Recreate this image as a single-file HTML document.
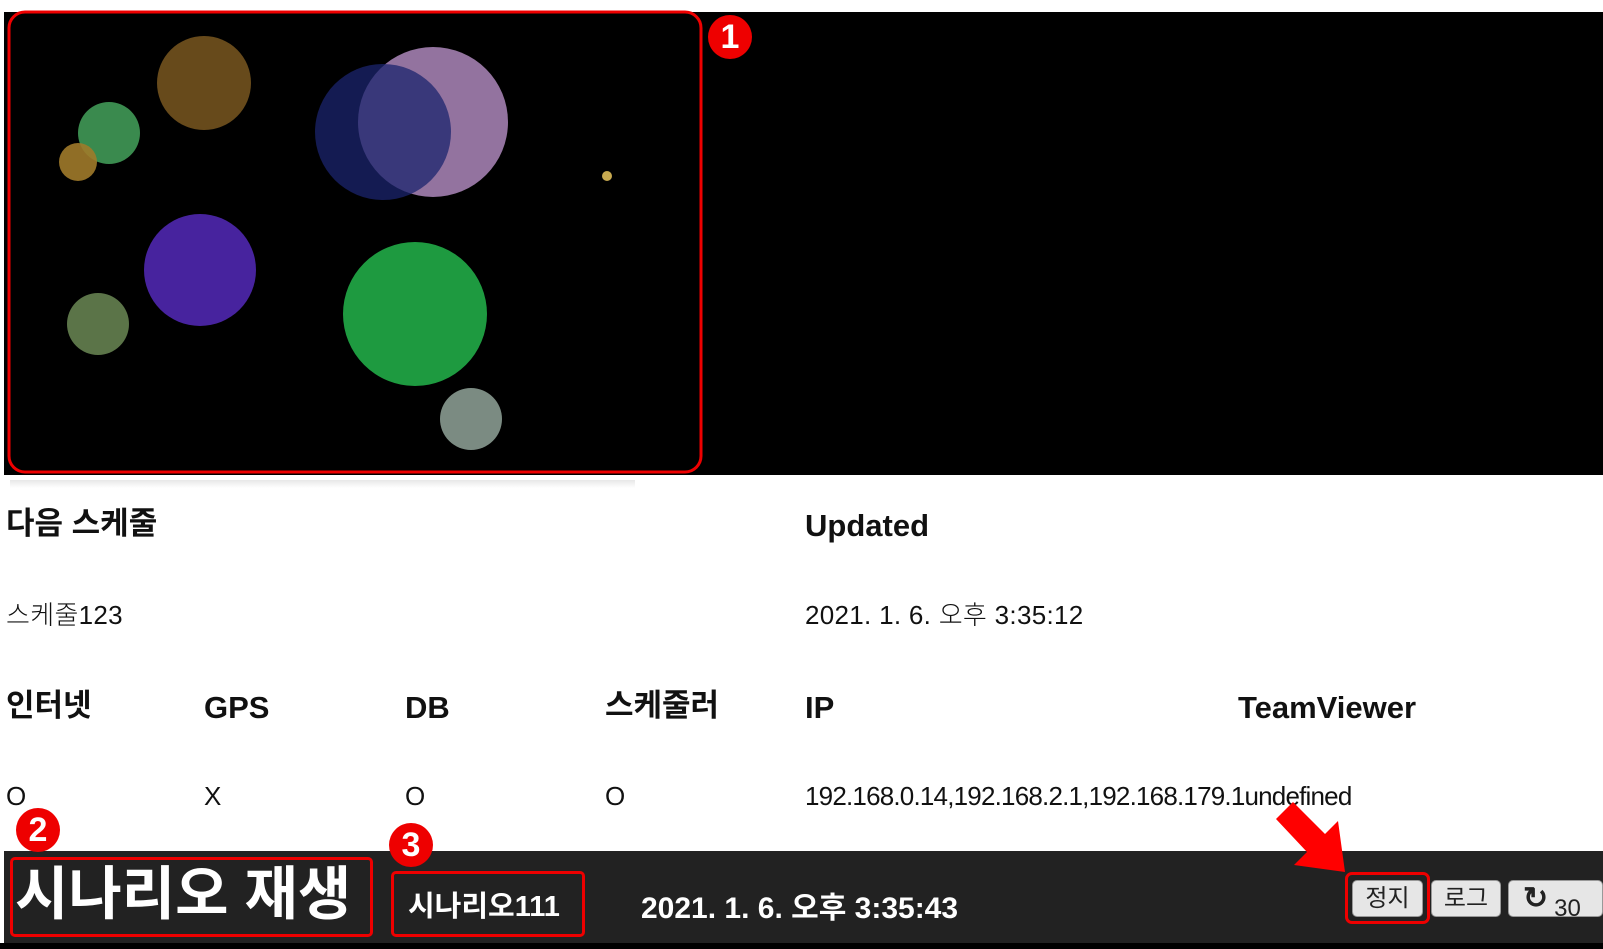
<!DOCTYPE html>
<html><head><meta charset="utf-8"><style>
*{margin:0;padding:0;box-sizing:border-box}
body{width:1603px;height:949px;background:#fff;position:relative;overflow:hidden;font-family:"Liberation Sans","Noto Sans CJK KR",sans-serif;color:#111}
.a{position:absolute;white-space:nowrap;line-height:1}
.h{font-size:31px;font-weight:bold}
.v{font-size:26px;letter-spacing:0.3px;font-weight:300}
.btn{position:absolute;top:880px;height:37px;background:#e6e6e6;border-radius:5px;border:1px solid #999;font-size:24px;color:#222;text-align:center;line-height:35px}
.badge{position:absolute;width:44px;height:44px;border-radius:50%;background:#e00;color:#fff;font-weight:bold;font-size:34px;text-align:center;line-height:44px}
</style></head><body>
<div style="position:absolute;left:4px;top:12px;width:1599px;height:463px;background:#000"></div>
<div style="position:absolute;left:10px;top:480px;width:625px;height:8px;background:linear-gradient(#e8e8e8,#fff)"></div>
<svg style="position:absolute;left:0;top:0" width="1603" height="480">
<circle cx="204" cy="83" r="47" fill="#674a1b"/>
<circle cx="109" cy="133" r="31" fill="#3a8a4e"/>
<circle cx="78" cy="162" r="19" fill="#a07a2a" opacity="0.9"/>
<circle cx="433" cy="122" r="75" fill="#93739f"/>
<circle cx="383" cy="132" r="68" fill="#1b246e" opacity="0.75"/>
<circle cx="607" cy="176" r="5" fill="#c8aa50"/>
<circle cx="200" cy="270" r="56" fill="#47239e"/>
<circle cx="98" cy="324" r="31" fill="#5b7448"/>
<circle cx="415" cy="314" r="72" fill="#1e9a40"/>
<circle cx="471" cy="419" r="31" fill="#7b8b82"/>
<rect x="9" y="12" width="692" height="460" rx="16" fill="none" stroke="#e00" stroke-width="3"/>
</svg>
<div class="badge" style="left:708px;top:15px">1</div>

<div class="a h" style="left:6px;top:508px">다음 스케줄</div>
<div class="a h" style="left:805px;top:510px">Updated</div>
<div class="a v" style="left:6px;top:602px">스케줄123</div>
<div class="a v" style="left:805px;top:602px">2021. 1. 6. 오후 3:35:12</div>
<div class="a h" style="left:6px;top:690px">인터넷</div>
<div class="a h" style="left:204px;top:692px">GPS</div>
<div class="a h" style="left:405px;top:692px">DB</div>
<div class="a h" style="left:605px;top:690px">스케줄러</div>
<div class="a h" style="left:805px;top:692px">IP</div>
<div class="a h" style="left:1238px;top:692px">TeamViewer</div>
<div class="a v" style="left:6px;top:783px">O</div>
<div class="a v" style="left:204px;top:783px">X</div>
<div class="a v" style="left:405px;top:783px">O</div>
<div class="a v" style="left:605px;top:783px">O</div>
<div class="a v" style="left:805px;top:783px;letter-spacing:-0.8px">192.168.0.14,192.168.2.1,192.168.179.1undefined</div>

<div style="position:absolute;left:4px;top:851px;width:1599px;height:92px;background:#222"></div>
<div style="position:absolute;left:0;top:943px;width:1603px;height:6px;background:#000"></div>
<div class="badge" style="left:16px;top:808px">2</div>
<div class="badge" style="left:389px;top:823px">3</div>
<div style="position:absolute;left:10px;top:857px;width:363px;height:80px;border:3px solid #e00;border-radius:5px"></div>
<div class="a" style="left:15px;top:866px;font-size:58px;font-weight:bold;color:#fff">시나리오 재생</div>
<div style="position:absolute;left:391px;top:871px;width:194px;height:66px;border:3px solid #e00;border-radius:5px"></div>
<div class="a" style="left:408px;top:893px;font-size:29px;font-weight:bold;color:#fff">시나리오111</div>
<div class="a" style="left:641px;top:894px;font-size:30px;font-weight:bold;color:#fff">2021. 1. 6. 오후 3:35:43</div>
<div class="btn" style="left:1352px;width:71px">정지</div>
<div style="position:absolute;left:1345px;top:872px;width:85px;height:52px;border:3px solid #e00;border-radius:7px"></div>
<div class="btn" style="left:1431px;width:70px">로그</div>
<div class="btn" style="left:1508px;width:95px;text-align:left;padding-left:14px"><span style="font-size:30px;font-weight:bold">&#x21BB;</span><span style="font-size:24px;position:relative;top:8px;margin-left:6px">30</span></div>
<svg style="position:absolute;left:0;top:0" width="1603" height="949">
<polygon points="1293,802 1325,834 1338,821 1345,872 1294,865 1307,852 1276,819" fill="#f00"/>
</svg>
</body></html>
